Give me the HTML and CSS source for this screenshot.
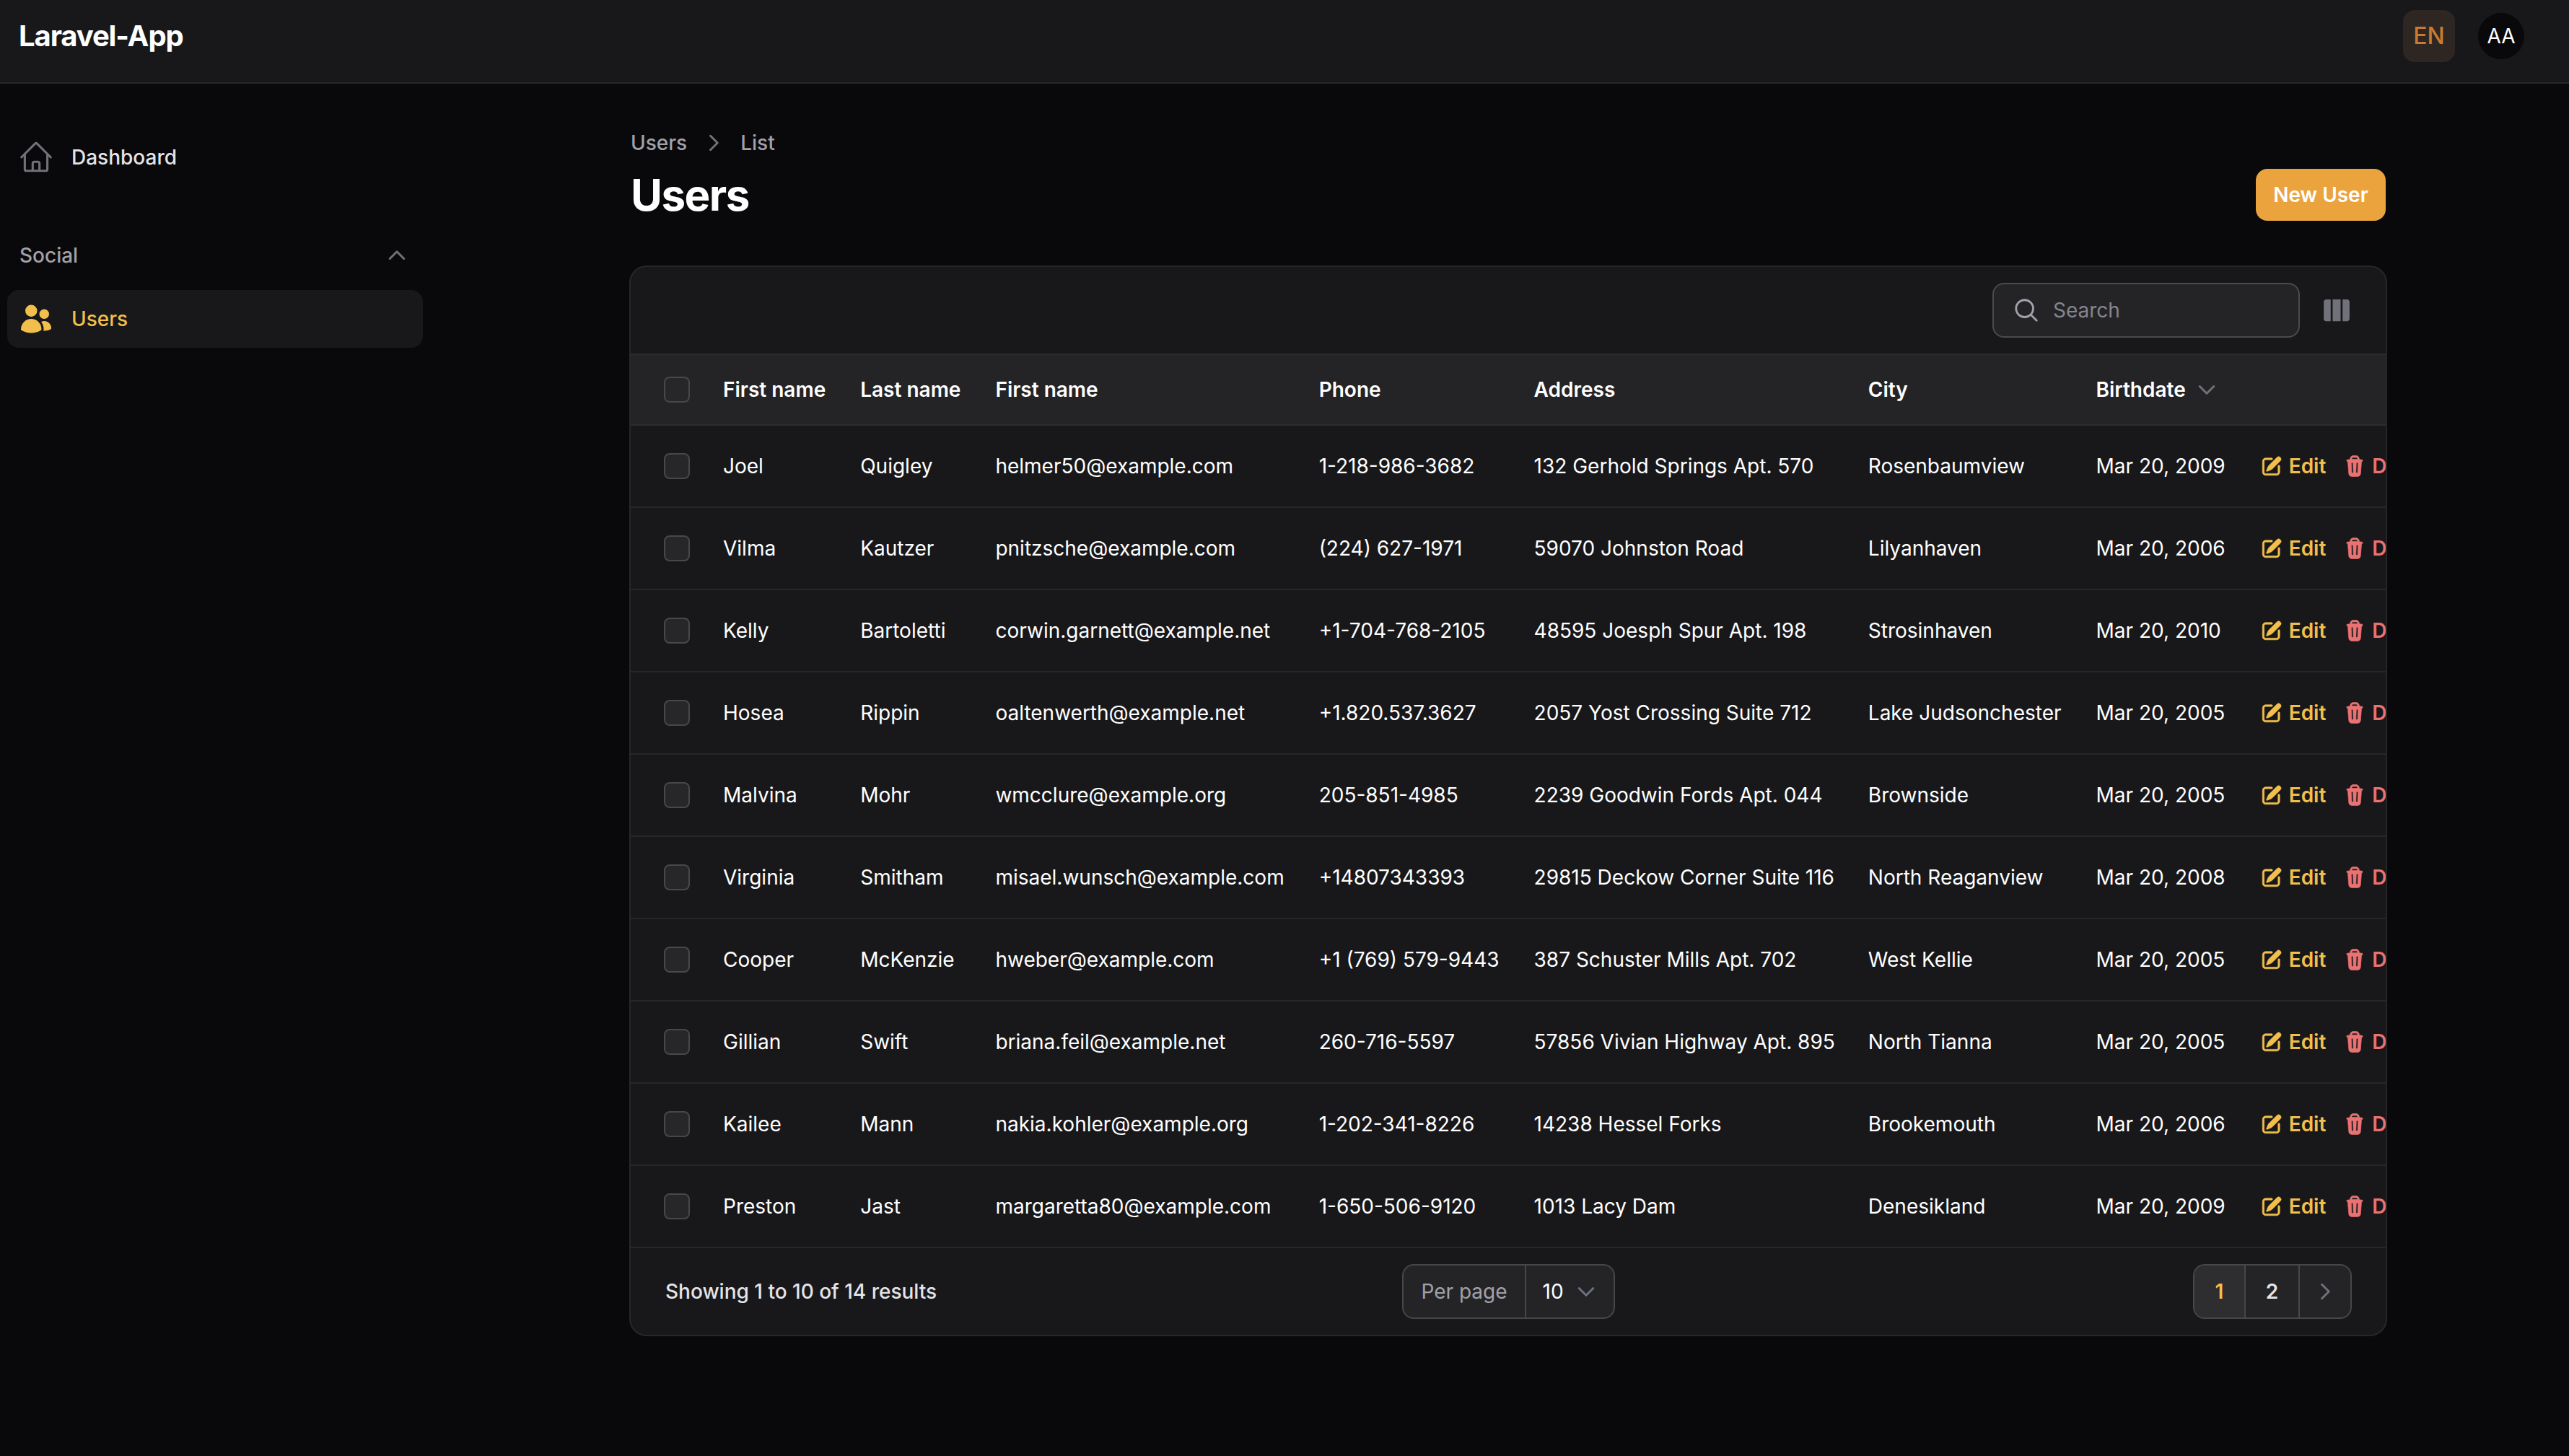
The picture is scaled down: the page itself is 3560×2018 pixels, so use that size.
FILE: index.html
```html
<!DOCTYPE html>
<html lang="en">
<head>
	<meta charset="utf-8">
	<title>Users - Laravel-App</title>
	<link rel="stylesheet" href="styles.css">
</head>
<body>
	<svg class="sprite" xmlns="http://www.w3.org/2000/svg">
		<symbol id="i-edit" viewBox="0 0 20 20">
			<path d="M5.433 13.917l1.262-3.155A4 4 0 017.58 9.42l6.92-6.918a2.121 2.121 0 013 3l-6.92 6.918c-.383.383-.84.685-1.343.886l-3.154 1.262a.5.5 0 01-.65-.65z"/>
			<path d="M3.5 5.75c0-.69.56-1.25 1.25-1.25H10A.75.75 0 0010 3H4.75A2.75 2.75 0 002 5.75v9.5A2.75 2.75 0 004.75 18h9.5A2.75 2.75 0 0017 15.25V10a.75.75 0 00-1.5 0v5.25c0 .69-.56 1.25-1.25 1.25h-9.5c-.69 0-1.25-.56-1.25-1.25v-9.5z"/>
		</symbol>
		<symbol id="i-trash" viewBox="0 0 20 20">
			<path fill-rule="evenodd" clip-rule="evenodd" d="M8.75 1A2.75 2.75 0 006 3.75v.443c-.795.077-1.584.176-2.365.298a.75.75 0 10.23 1.482l.149-.022.841 10.518A2.75 2.75 0 007.596 19h4.807a2.75 2.75 0 002.742-2.53l.841-10.52.149.023a.75.75 0 00.23-1.482A41.03 41.03 0 0014 4.193V3.75A2.75 2.75 0 0011.25 1h-2.5zM10 4c.84 0 1.673.025 2.5.075V3.75c0-.69-.56-1.25-1.25-1.25h-2.5c-.69 0-1.25.56-1.25 1.25v.325C8.327 4.025 9.16 4 10 4zM8.58 7.72a.75.75 0 00-1.5.06l.3 7.5a.75.75 0 101.5-.06l-.3-7.5zm4.34.06a.75.75 0 10-1.5-.06l-.3 7.5a.75.75 0 101.5.06l.3-7.5z"/>
		</symbol>
	</svg>

	<header class="topbar">
		<div class="logo">Laravel-App</div>
		<div class="topbar-right">
			<div class="lang">EN</div>
			<div class="avatar">AA</div>
		</div>
	</header>

	<div class="layout">
		<aside class="sidebar">
			<a class="nav-item nav-dashboard">
				<svg class="nav-icon" viewBox="0 0 24 24" fill="none" stroke="#71717a" stroke-width="1.5" stroke-linecap="round" stroke-linejoin="round"><path d="M2.25 12l8.954-8.955c.44-.439 1.152-.439 1.591 0L21.75 12M4.5 9.75v10.125c0 .621.504 1.125 1.125 1.125H9.75v-4.875c0-.621.504-1.125 1.125-1.125h2.25c.621 0 1.125.504 1.125 1.125V21h4.125c.621 0 1.125-.504 1.125-1.125V9.75M8.25 21h8.25"/></svg>
				<span>Dashboard</span>
			</a>
			<div class="nav-group">
				<span>Social</span>
				<svg class="nav-chevron" viewBox="0 0 20 20" fill="none" stroke="#71717a" stroke-width="2" stroke-linecap="round" stroke-linejoin="round"><path d="M3.5 13L10 6.5l6.5 6.5"/></svg>
			</div>
			<a class="nav-item nav-active">
				<svg class="nav-icon" viewBox="0 0 24 24" fill="#f2bf4c"><path d="M4.5 6.375a4.125 4.125 0 118.25 0 4.125 4.125 0 01-8.25 0zM14.25 8.625a3.375 3.375 0 116.75 0 3.375 3.375 0 01-6.75 0zM1.5 19.125a7.125 7.125 0 0114.25 0v.003l-.001.119a.75.75 0 01-.363.63 13.067 13.067 0 01-6.761 1.873c-2.472 0-4.786-.684-6.76-1.873a.75.75 0 01-.364-.63l-.001-.122zM17.25 19.128l-.001.144a2.25 2.25 0 01-.233.96 10.088 10.088 0 005.06-1.01.75.75 0 00.42-.643 4.875 4.875 0 00-6.957-4.611 8.586 8.586 0 011.71 5.157v.003z"/></svg>
				<span>Users</span>
			</a>
		</aside>

		<main class="main">
			<div class="page-head">
				<div>
					<nav class="crumbs">
						<span>Users</span>
						<svg class="crumb-sep" viewBox="0 0 20 20" fill="none" stroke="#71717a" stroke-width="2" stroke-linecap="round" stroke-linejoin="round"><path d="M7 3.5l6.5 6.5L7 16.5"/></svg>
						<span>List</span>
					</nav>
					<h1>Users</h1>
				</div>
				<a class="btn-new">New User</a>
			</div>

			<section class="card">
				<div class="toolbar">
					<div class="search">
						<svg class="search-icon" viewBox="0 0 24 24" fill="none" stroke="#a1a1aa" stroke-width="1.75" stroke-linecap="round" stroke-linejoin="round"><path d="M21 21l-5.197-5.197m0 0A7.5 7.5 0 105.196 5.196a7.5 7.5 0 0010.607 10.607z"/></svg>
						<span>Search</span>
					</div>
					<svg class="columns-icon" viewBox="0 0 24 24" fill="#71717a"><path d="M15 3.75H9v16.5h6V3.75zM16.5 20.25h3.375c1.035 0 1.875-.84 1.875-1.875V5.625c0-1.036-.84-1.875-1.875-1.875H16.5v16.5zM4.125 3.75H7.5v16.5H4.125a1.875 1.875 0 01-1.875-1.875V5.625c0-1.036.84-1.875 1.875-1.875z"/></svg>
				</div>

				<div class="table-wrap">
					<table class="users">
						<thead>
							<tr>
								<th class="col-check"><span class="check"></span></th>
								<th>First name</th>
								<th>Last name</th>
								<th>First name</th>
								<th>Phone</th>
								<th>Address</th>
								<th>City</th>
								<th><span class="sort">Birthdate <svg class="sort-icon" viewBox="0 0 20 20" fill="none" stroke="#71717a" stroke-width="2" stroke-linecap="round" stroke-linejoin="round"><path d="M3.5 7l6.5 6.5L16.5 7"/></svg></span></th>
								<th></th>
							</tr>
						</thead>
						<tbody>
							<tr>
								<td class="col-check"><span class="check"></span></td>
								<td>Joel</td><td>Quigley</td><td>helmer50@example.com</td><td>1-218-986-3682</td><td>132 Gerhold Springs Apt. 570</td><td>Rosenbaumview</td><td>Mar 20, 2009</td>
								<td><div class="actions"><a class="act-edit"><svg><use href="#i-edit"/></svg>Edit</a><a class="act-del"><svg><use href="#i-trash"/></svg>Delete</a></div></td>
							</tr>
							<tr>
								<td class="col-check"><span class="check"></span></td>
								<td>Vilma</td><td>Kautzer</td><td>pnitzsche@example.com</td><td>(224) 627-1971</td><td>59070 Johnston Road</td><td>Lilyanhaven</td><td>Mar 20, 2006</td>
								<td><div class="actions"><a class="act-edit"><svg><use href="#i-edit"/></svg>Edit</a><a class="act-del"><svg><use href="#i-trash"/></svg>Delete</a></div></td>
							</tr>
							<tr>
								<td class="col-check"><span class="check"></span></td>
								<td>Kelly</td><td>Bartoletti</td><td>corwin.garnett@example.net</td><td>+1-704-768-2105</td><td>48595 Joesph Spur Apt. 198</td><td>Strosinhaven</td><td>Mar 20, 2010</td>
								<td><div class="actions"><a class="act-edit"><svg><use href="#i-edit"/></svg>Edit</a><a class="act-del"><svg><use href="#i-trash"/></svg>Delete</a></div></td>
							</tr>
							<tr>
								<td class="col-check"><span class="check"></span></td>
								<td>Hosea</td><td>Rippin</td><td>oaltenwerth@example.net</td><td>+1.820.537.3627</td><td>2057 Yost Crossing Suite 712</td><td>Lake Judsonchester</td><td>Mar 20, 2005</td>
								<td><div class="actions"><a class="act-edit"><svg><use href="#i-edit"/></svg>Edit</a><a class="act-del"><svg><use href="#i-trash"/></svg>Delete</a></div></td>
							</tr>
							<tr>
								<td class="col-check"><span class="check"></span></td>
								<td>Malvina</td><td>Mohr</td><td>wmcclure@example.org</td><td>205-851-4985</td><td>2239 Goodwin Fords Apt. 044</td><td>Brownside</td><td>Mar 20, 2005</td>
								<td><div class="actions"><a class="act-edit"><svg><use href="#i-edit"/></svg>Edit</a><a class="act-del"><svg><use href="#i-trash"/></svg>Delete</a></div></td>
							</tr>
							<tr>
								<td class="col-check"><span class="check"></span></td>
								<td>Virginia</td><td>Smitham</td><td>misael.wunsch@example.com</td><td>+14807343393</td><td>29815 Deckow Corner Suite 116</td><td>North Reaganview</td><td>Mar 20, 2008</td>
								<td><div class="actions"><a class="act-edit"><svg><use href="#i-edit"/></svg>Edit</a><a class="act-del"><svg><use href="#i-trash"/></svg>Delete</a></div></td>
							</tr>
							<tr>
								<td class="col-check"><span class="check"></span></td>
								<td>Cooper</td><td>McKenzie</td><td>hweber@example.com</td><td>+1 (769) 579-9443</td><td>387 Schuster Mills Apt. 702</td><td>West Kellie</td><td>Mar 20, 2005</td>
								<td><div class="actions"><a class="act-edit"><svg><use href="#i-edit"/></svg>Edit</a><a class="act-del"><svg><use href="#i-trash"/></svg>Delete</a></div></td>
							</tr>
							<tr>
								<td class="col-check"><span class="check"></span></td>
								<td>Gillian</td><td>Swift</td><td>briana.feil@example.net</td><td>260-716-5597</td><td>57856 Vivian Highway Apt. 895</td><td>North Tianna</td><td>Mar 20, 2005</td>
								<td><div class="actions"><a class="act-edit"><svg><use href="#i-edit"/></svg>Edit</a><a class="act-del"><svg><use href="#i-trash"/></svg>Delete</a></div></td>
							</tr>
							<tr>
								<td class="col-check"><span class="check"></span></td>
								<td>Kailee</td><td>Mann</td><td>nakia.kohler@example.org</td><td>1-202-341-8226</td><td>14238 Hessel Forks</td><td>Brookemouth</td><td>Mar 20, 2006</td>
								<td><div class="actions"><a class="act-edit"><svg><use href="#i-edit"/></svg>Edit</a><a class="act-del"><svg><use href="#i-trash"/></svg>Delete</a></div></td>
							</tr>
							<tr>
								<td class="col-check"><span class="check"></span></td>
								<td>Preston</td><td>Jast</td><td>margaretta80@example.com</td><td>1-650-506-9120</td><td>1013 Lacy Dam</td><td>Denesikland</td><td>Mar 20, 2009</td>
								<td><div class="actions"><a class="act-edit"><svg><use href="#i-edit"/></svg>Edit</a><a class="act-del"><svg><use href="#i-trash"/></svg>Delete</a></div></td>
							</tr>
						</tbody>
					</table>
				</div>

				<div class="card-foot">
					<div class="results">Showing 1 to 10 of 14 results</div>
					<div class="per-page">
						<span class="per-label">Per page</span>
						<span class="per-value">10
							<svg class="per-chevron" viewBox="0 0 20 20" fill="none" stroke="#6b7280" stroke-width="2" stroke-linecap="round" stroke-linejoin="round"><path d="M3.5 7l6.5 6.5L16.5 7"/></svg>
						</span>
					</div>
					<div class="pager">
						<span class="page page-current">1</span>
						<span class="page">2</span>
						<span class="page page-next"><svg class="next-icon" viewBox="0 0 20 20" fill="none" stroke="#71717a" stroke-width="2" stroke-linecap="round" stroke-linejoin="round"><path d="M7 3.5l6.5 6.5L7 16.5"/></svg></span>
					</div>
				</div>
			</section>
		</main>
	</div>
</body>
</html>
```

FILE: styles.css
```css
* {
	box-sizing: border-box;
}
html, body {
	height: 100%;
}
body {
	margin: 0;
	background: #09090b;
	color: #fff;
	font-family: Inter, "Liberation Sans", sans-serif;
	font-size: 28px;
	line-height: 40px;
	overflow: hidden;
}
.sprite {
	display: none;
}

/* top bar */
.topbar {
	display: flex;
	justify-content: space-between;
	align-items: center;
	height: 116px;
	padding: 0 62px 14px 26px;
	background: #18181b;
	border-bottom: 2px solid #27272a;
}
.logo {
	font-size: 40px;
	font-weight: 700;
	letter-spacing: -1.1px;
}
.topbar-right {
	display: flex;
	align-items: center;
	gap: 32px;
}
.lang {
	display: flex;
	align-items: center;
	justify-content: center;
	width: 72px;
	height: 72px;
	border-radius: 16px;
	background: #2e2622;
	color: #c97a30;
	font-size: 32px;
	font-weight: 500;
}
.avatar {
	display: flex;
	align-items: center;
	justify-content: center;
	width: 64px;
	height: 64px;
	border-radius: 50%;
	background: #09090b;
	font-size: 28px;
}

/* sidebar */
.layout {
	display: flex;
}
.sidebar {
	flex: none;
	width: 618px;
	padding: 60px 32px 0 10px;
}
.nav-item {
	display: flex;
	align-items: center;
	gap: 24px;
	height: 80px;
	padding: 0 15px;
	border-radius: 16px;
	color: #e4e4e7;
	font-weight: 500;
}
.nav-icon {
	flex: none;
	width: 50px;
	height: 50px;
}
.nav-dashboard {
	height: 84px;
	margin-bottom: 74px;
}
.nav-group {
	display: flex;
	justify-content: space-between;
	align-items: center;
	height: 40px;
	margin-bottom: 28px;
	padding: 0 21px 0 17px;
	color: #a1a1aa;
	font-weight: 500;
}
.nav-chevron {
	width: 30px;
	height: 30px;
}
.nav-active {
	background: #18181a;
	color: #f2bf4c;
}
.nav-active .nav-icon {
	width: 48px;
	height: 48px;
	margin: 0 1px;
}

/* page */
.main {
	flex: 1;
	min-width: 0;
	padding: 62px 252px 0 254px;
}
.page-head {
	display: flex;
	justify-content: space-between;
	align-items: flex-end;
	padding: 0 2px;
}
.crumbs {
	display: flex;
	align-items: center;
	gap: 22px;
	margin-bottom: 16px;
	color: #a1a1aa;
	font-weight: 500;
}
.crumb-sep {
	width: 30px;
	height: 30px;
}
h1 {
	margin: 0;
	font-size: 60px;
	line-height: 72px;
	font-weight: 700;
	letter-spacing: -1.5px;
}
.btn-new {
	display: flex;
	align-items: center;
	justify-content: center;
	width: 180px;
	height: 72px;
	border-radius: 16px;
	background: #eaa33d;
	font-weight: 600;
}

/* card */
.card {
	margin-top: 62px;
	border: 2px solid #27272a;
	border-radius: 24px;
	background: #18181b;
	overflow: hidden;
}
.toolbar {
	display: flex;
	justify-content: flex-end;
	align-items: center;
	gap: 29px;
	height: 122px;
	padding-right: 46px;
	border-bottom: 2px solid #2c2c2f;
}
.search {
	display: flex;
	align-items: center;
	gap: 18px;
	width: 426px;
	height: 76px;
	padding: 0 26px;
	border: 2px solid #4a4a4f;
	border-radius: 16px;
	background: #242427;
	color: #85858d;
}
.search-icon {
	width: 38px;
	height: 38px;
}
.columns-icon {
	width: 44px;
	height: 44px;
}
.table-wrap {
	overflow: hidden;
}
.users {
	border-collapse: separate;
	border-spacing: 0;
	white-space: nowrap;
}
.users th {
	height: 98px;
	padding: 0 24px;
	background: #242427;
	border-bottom: 2px solid #2c2c2f;
	font-weight: 600;
	text-align: left;
}
.users td {
	height: 114px;
	padding: 0 24px;
	border-bottom: 2px solid #27272a;
}
.users .col-check {
	padding: 0 22px 0 46px;
	line-height: 0;
}
.users td:nth-child(6), .users th:nth-child(6) {
	padding-right: 22px;
}
.check {
	display: inline-block;
	width: 36px;
	height: 36px;
	border: 2px solid #47474c;
	border-radius: 8px;
	background: #27272a;
}
.sort {
	display: inline-flex;
	align-items: center;
	gap: 14px;
}
.sort-icon {
	width: 30px;
	height: 30px;
}
.actions {
	display: flex;
	gap: 24px;
	font-weight: 600;
}
.actions a {
	display: flex;
	align-items: center;
	gap: 8px;
}
.actions svg {
	width: 32px;
	height: 32px;
	fill: currentColor;
	stroke: currentColor;
	stroke-width: 0.4;
}
.act-edit {
	color: #f2bf4c;
}
.act-del {
	color: #ea7272;
}

/* footer of the card */
.card-foot {
	display: grid;
	grid-template-columns: 1fr auto 1fr;
	align-items: center;
	height: 120px;
	padding: 0 47px 0 48px;
}
.results {
	color: #e4e4e7;
	font-weight: 500;
}
.per-page, .pager {
	display: flex;
	height: 76px;
	border: 2px solid #46464b;
	border-radius: 16px;
	background: #242427;
	overflow: hidden;
}
.per-page > span, .page {
	display: flex;
	align-items: center;
}
.per-label {
	padding: 0 24px;
	color: #a1a1aa;
	border-right: 2px solid #46464b;
}
.per-value {
	gap: 16px;
	padding: 0 23px;
}
.per-chevron {
	width: 30px;
	height: 30px;
}
.pager {
	justify-self: end;
}
.page {
	justify-content: center;
	width: 75px;
	border-right: 2px solid #46464b;
	color: #e4e4e7;
	font-weight: 600;
}
.page-current {
	width: 71px;
	background: #2e2e31;
	color: #f2bf4c;
}
.page-next {
	width: 70px;
	border-right: 0;
}
.next-icon {
	width: 30px;
	height: 30px;
}
```
